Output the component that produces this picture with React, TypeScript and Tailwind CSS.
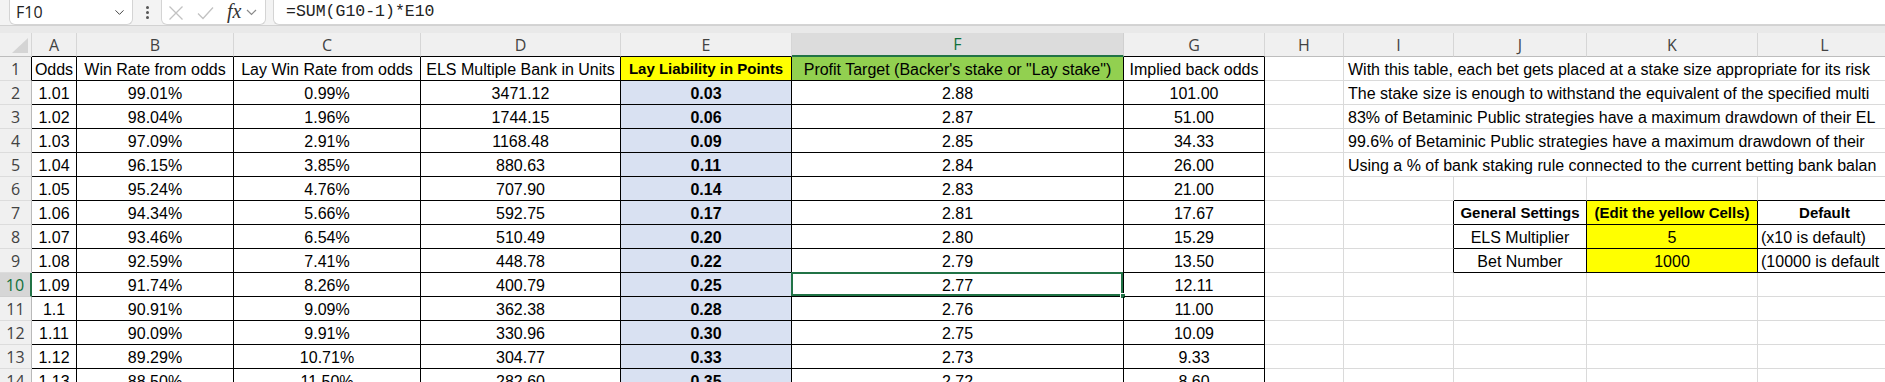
import { ChevronDown } from "lucide-react";

const letters = ["A", "B", "C", "D", "E", "F", "G", "H", "I", "J", "K", "L"];

const titles = [
  "Odds",
  "Win Rate from odds",
  "Lay Win Rate from odds",
  "ELS Multiple Bank in Units",
  "Lay Liability in Points",
  "Profit Target (Backer's stake or \"Lay stake\")",
  "Implied back odds",
];

const data: string[][] = [
  ["1.01", "99.01%", "0.99%", "3471.12", "0.03", "2.88", "101.00"],
  ["1.02", "98.04%", "1.96%", "1744.15", "0.06", "2.87", "51.00"],
  ["1.03", "97.09%", "2.91%", "1168.48", "0.09", "2.85", "34.33"],
  ["1.04", "96.15%", "3.85%", "880.63", "0.11", "2.84", "26.00"],
  ["1.05", "95.24%", "4.76%", "707.90", "0.14", "2.83", "21.00"],
  ["1.06", "94.34%", "5.66%", "592.75", "0.17", "2.81", "17.67"],
  ["1.07", "93.46%", "6.54%", "510.49", "0.20", "2.80", "15.29"],
  ["1.08", "92.59%", "7.41%", "448.78", "0.22", "2.79", "13.50"],
  ["1.09", "91.74%", "8.26%", "400.79", "0.25", "2.77", "12.11"],
  ["1.1", "90.91%", "9.09%", "362.38", "0.28", "2.76", "11.00"],
  ["1.11", "90.09%", "9.91%", "330.96", "0.30", "2.75", "10.09"],
  ["1.12", "89.29%", "10.71%", "304.77", "0.33", "2.73", "9.33"],
  ["1.13", "88.50%", "11.50%", "282.60", "0.35", "2.72", "8.60"],
];

const notes = [
  "With this table, each bet gets placed at a stake size appropriate for its risk",
  "The stake size is enough to withstand the equivalent of the specified multi",
  "83% of Betaminic Public strategies have a maximum drawdown of their EL",
  "99.6% of Betaminic Public strategies have a maximum drawdown of their",
  "Using a % of bank staking rule connected to the current betting bank balan",
];

const settings: [string, string, string][] = [
  ["General Settings", "(Edit the yellow Cells)", "Default"],
  ["ELS Multiplier", "5", "(x10 is default)"],
  ["Bet Number", "1000", "(10000 is default"],
];

const cell = "h-[24px] border-r border-b flex items-center whitespace-nowrap pt-[2px]";
const grid = "border-[#dadada]";

function RowHead({ n }: { n: number }) {
  if (n === 10) {
    return (
      <div className="h-[24px] flex items-center justify-center bg-[#d6d6d6] border-b border-b-[#cfcfcf] border-r-2 border-r-[#217346] font-['Open_Sans',sans-serif] text-[16px] text-[#0f703b]">
        {n}
      </div>
    );
  }
  return (
    <div
      className={`h-[24px] flex items-center justify-center bg-[#f0f0f0] border-b border-b-[#dcdcdc] border-r font-['Open_Sans',sans-serif] text-[16px] text-[#424242] ${
        n === 1 ? "border-r-black" : "border-r-[#b9b9b9]"
      }`}
    >
      {n}
    </div>
  );
}

function DataCells({ r }: { r: number }) {
  const vals = r === 1 ? titles : data[r - 2];
  return (
    <>
      {vals.map((v, i) => {
        let extra = "";
        if (i === 4) extra = r === 1 ? "bg-[#ffff00] font-bold text-[15px]" : "bg-[#d9e1f2] font-bold";
        if (i === 5 && r === 1) extra = "bg-[#92d050]";
        return (
          <div key={i} className={`${cell} border-black justify-center relative ${extra}`}>
            {v}
            {i === 5 && r === 10 && (
              <>
                <div className="absolute -left-[1px] -top-[1px] right-0 bottom-0 border-2 border-[#217346]" />
                <div className="absolute -right-[3px] -bottom-[3px] w-[6px] h-[6px] bg-[#217346] border border-white" />
              </>
            )}
          </div>
        );
      })}
      <div className={`${cell} ${grid}`} />
    </>
  );
}

function SideCells({ r }: { r: number }) {
  if (r <= 5) {
    return (
      <div className={`col-span-4 h-[24px] border-b ${grid} flex items-center whitespace-nowrap pl-[4px] pt-[2px]`}>
        {notes[r - 1]}
      </div>
    );
  }
  if (r === 6) {
    return (
      <>
        <div className={`${cell} ${grid}`} />
        <div className={`${cell} border-r-[#dadada] border-b-black`} />
        <div className={`${cell} border-r-[#dadada] border-b-black`} />
        <div className={`${cell} border-r-[#dadada] border-b-black`} />
      </>
    );
  }
  if (r >= 7 && r <= 9) {
    const [j, k, l] = settings[r - 7];
    const bold = r === 7 ? "font-bold text-[15px]" : "";
    return (
      <>
        <div className={`${cell} border-r-black border-b-[#dadada]`} />
        <div className={`${cell} border-black justify-center ${bold}`}>{j}</div>
        <div className={`${cell} border-black justify-center bg-[#ffff00] ${bold}`}>{k}</div>
        <div className={`${cell} border-black ${r === 7 ? "justify-center font-bold text-[15px]" : "justify-start pl-[3px]"}`}>{l}</div>
      </>
    );
  }
  return (
    <>
      <div className={`${cell} ${grid}`} />
      <div className={`${cell} ${grid}`} />
      <div className={`${cell} ${grid}`} />
      <div className={`${cell} ${grid}`} />
    </>
  );
}

function FormulaBar() {
  return (
    <div className="h-[25px] bg-[#f3f3f3] flex">
      <div className="ml-[9px] w-[124px] bg-white border border-t-0 border-[#d4d4d4] rounded-b-[6px] flex items-center justify-between pl-[6px] pr-[5px]">
        <span className="font-['Open_Sans',sans-serif] text-[16px] text-[#222]">F10</span>
        <ChevronDown size={15} strokeWidth={1.6} className="text-[#444]" />
      </div>
      <div className="w-[28px] flex flex-col items-center justify-center gap-[2px]">
        <div className="w-[3px] h-[3px] rounded-full bg-[#555]" />
        <div className="w-[3px] h-[3px] rounded-full bg-[#555]" />
        <div className="w-[3px] h-[3px] rounded-full bg-[#555]" />
      </div>
      <div className="w-[105px] bg-white border border-t-0 border-[#d4d4d4] rounded-b-[6px] flex items-center pl-[6px]">
        <svg width="16" height="16" viewBox="0 0 16 16" className="mt-[1px]">
          <path d="M1.5 1.5 L14.5 14.5 M14.5 1.5 L1.5 14.5" stroke="#c2c2c2" strokeWidth="1.3" fill="none" />
        </svg>
        <svg width="17" height="14" viewBox="0 0 17 14" className="ml-[13px] mt-[1px]">
          <path d="M1 7.5 L6 12.5 L16 1.5" stroke="#c2c2c2" strokeWidth="1.3" fill="none" />
        </svg>
        <span className="ml-[13px] font-['Liberation_Serif',serif] italic text-[20px] leading-none text-[#333] mb-[2px]">
          fx
        </span>
        <svg width="11" height="7" viewBox="0 0 11 7" className="ml-[5px]">
          <path d="M1 1 L5.5 5.5 L10 1" stroke="#8a8a8a" strokeWidth="1.2" fill="none" />
        </svg>
      </div>
      <div className="ml-[7px] flex-1 bg-white border-l border-b border-[#d4d4d4] rounded-bl-[6px] flex items-center pl-[12px]">
        <span className="font-['Liberation_Mono',monospace] text-[16.5px] text-[#222]">=SUM(G10-1)*E10</span>
      </div>
    </div>
  );
}

export default function App() {
  return (
    <div className="w-[1885px] h-[382px] overflow-hidden bg-white font-['Liberation_Sans',Arial,sans-serif] text-[16px] text-black">
      <FormulaBar />
      <div className="h-[8px] bg-[#e9e9e9] border-t border-[#d2d2d2]" />
      <div className="grid grid-cols-[32px_45px_157px_187px_200px_171px_332px_141px_79px_110px_133px_171px_134px] auto-rows-[24px]">
        <div className="h-[24px] bg-[#f0f0f0] border-r border-b border-r-[#d6d6d6] border-b-[#bdbdbd]">
          <svg width="31" height="23" viewBox="0 0 31 23">
            <polygon points="28,5 28,20 12,20" fill="#d4d4d4" />
          </svg>
        </div>
        {letters.map((l, i) =>
          l === "F" ? (
            <div
              key={l}
              className="h-[24px] flex items-center justify-center bg-[#dcdcdc] border-r border-r-[#d0d0d0] border-b-2 border-b-[#217346] font-['Open_Sans',sans-serif] text-[16px] text-[#0f703b]"
            >
              {l}
            </div>
          ) : (
            <div
              key={l}
              className={`h-[24px] flex items-center justify-center bg-[#f0f0f0] border-r border-b border-r-[#d6d6d6] font-['Open_Sans',sans-serif] text-[16px] text-[#424242] ${
                i < 7 ? "border-b-black" : "border-b-[#bdbdbd]"
              }`}
            >
              {l}
            </div>
          )
        )}
        {Array.from({ length: 14 }, (_, k) => k + 1).map((r) => (
          <div key={r} className="contents">
            <RowHead n={r} />
            <DataCells r={r} />
            <SideCells r={r} />
          </div>
        ))}
      </div>
    </div>
  );
}
